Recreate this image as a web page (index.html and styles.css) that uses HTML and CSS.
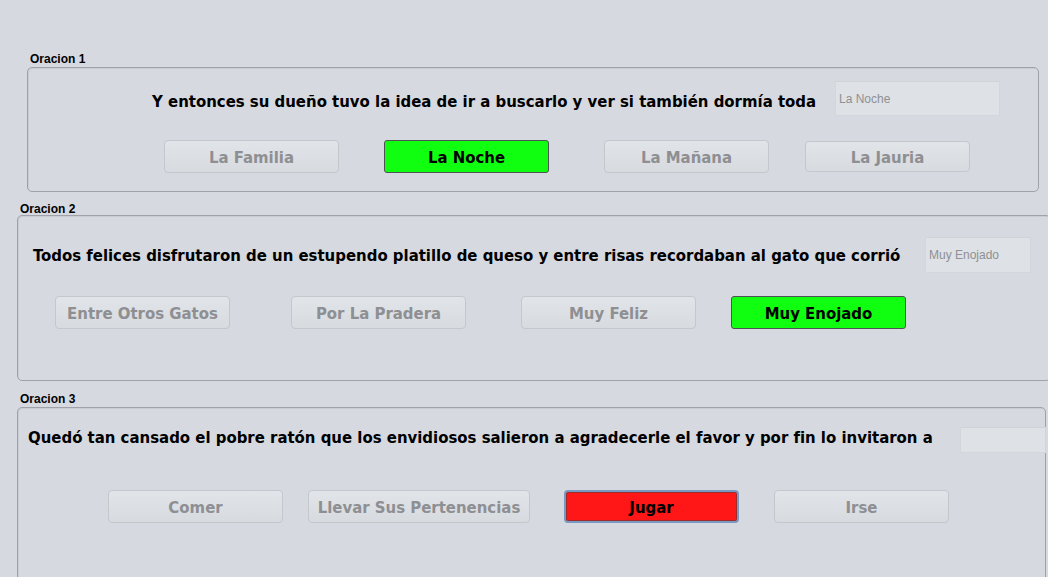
FILE: index.html
```html
<!DOCTYPE html>
<html lang="es">
<head>
<meta charset="utf-8">
<title>Oraciones</title>
<link rel="stylesheet" href="styles.css">
</head>
<body>
<div class="screen">
  <div class="group-title t1">Oracion 1</div>
  <section class="panel p1">
    <div class="sentence-row">
      <span class="sentence">Y entonces su dueño tuvo la idea de ir a buscarlo y ver si también dormía toda</span>
      <div class="field">La Noche</div>
    </div>
    <div class="options">
      <button class="opt" disabled>La Familia</button>
      <button class="opt correct">La Noche</button>
      <button class="opt" disabled>La Mañana</button>
      <button class="opt" disabled>La Jauria</button>
    </div>
  </section>

  <div class="group-title t2">Oracion 2</div>
  <section class="panel p2">
    <div class="sentence-row">
      <span class="sentence">Todos felices disfrutaron de un estupendo platillo de queso y entre risas recordaban al gato que corrió</span>
      <div class="field">Muy Enojado</div>
    </div>
    <div class="options">
      <button class="opt" disabled>Entre Otros Gatos</button>
      <button class="opt" disabled>Por La Pradera</button>
      <button class="opt" disabled>Muy Feliz</button>
      <button class="opt correct">Muy Enojado</button>
    </div>
  </section>

  <div class="group-title t3">Oracion 3</div>
  <section class="panel p3">
    <div class="sentence-row">
      <span class="sentence">Quedó tan cansado el pobre ratón que los envidiosos salieron a agradecerle el favor y por fin lo invitaron a</span>
      <div class="field"></div>
    </div>
    <div class="options">
      <button class="opt" disabled>Comer</button>
      <button class="opt" disabled>Llevar Sus Pertenencias</button>
      <button class="opt wrong">Jugar</button>
      <button class="opt" disabled>Irse</button>
    </div>
  </section>
</div>
</body>
</html>
```

FILE: styles.css
```css
html, body {
  margin: 0;
  padding: 0;
  background: #d6d9df;
  overflow: hidden;
}

.screen {
  width: 1048px;
  height: 577px;
  padding-top: 52px;
  box-sizing: border-box;
  overflow: hidden;
  font-family: "DejaVu Sans Condensed", "DejaVu Sans", sans-serif;
  font-stretch: condensed;
}

.group-title {
  font-family: "Liberation Sans", Arial, sans-serif;
  font-weight: bold;
  font-size: 12px;
  line-height: 14px;
  color: #000;
}
.t1 { margin-left: 30px; height: 14px; margin-bottom: 1px; }
.t2 { margin-left: 20px; margin-top: 10px; height: 13px; }
.t3 { margin-left: 20px; margin-top: 11px; height: 15px; }

.panel {
  box-sizing: border-box;
  border: 1px solid #9fa2a8;
  border-radius: 5px;
  box-shadow: inset 1px 1px 0 #c9ccd2;
  display: flex;
  flex-direction: column;
}
.p1 { margin-left: 27px; width: 1012px; height: 125px; }
.p2 { margin-left: 17px; width: 1034px; height: 166px; }
.p3 { margin-left: 17px; width: 1029px; height: 190px; }

.sentence-row {
  display: flex;
  align-items: center;
}
.sentence {
  font-weight: bold;
  font-size: 16.6px;
  color: #000;
  white-space: nowrap;
}
.field {
  box-sizing: border-box;
  margin-left: auto;
  background: #dee1e5;
  border: 1px solid #d3d6db;
  border-top-color: #cfd2d7;
  font-family: "Liberation Sans", Arial, sans-serif;
  font-size: 12px;
  color: #8e9094;
  padding-left: 3px;
  display: flex;
  align-items: center;
}

.p1 .sentence-row { margin-top: 13px; padding-left: 124px; }
.p1 .sentence { padding-top: 5px; }
.p1 .field { width: 165px; height: 35px; margin-right: 38px; }
.p2 .sentence-row { margin-top: 21px; padding-left: 15px; }
.p2 .field { width: 106px; height: 36px; margin-right: 19px; }
.p3 .sentence-row { margin-top: 19px; padding-left: 10px; }
.p3 .field { width: 86px; height: 26px; margin-right: -1px; }
.p3 .sentence {
  display: block;
  line-height: 20px;
  height: 18px;
  overflow: hidden;
  margin-bottom: 6px;
}

.options {
  display: flex;
  align-items: flex-start;
}
.p1 .options { margin-top: 24px; padding-left: 136px; }
.p2 .options { margin-top: 23px; padding-left: 37px; }
.p3 .options { margin-top: 37px; padding-left: 90px; }

.opt {
  box-sizing: border-box;
  width: 175px;
  height: 33px;
  padding: 2px 0 0;
  font-family: inherit;
  font-stretch: condensed;
  font-weight: bold;
  font-size: 16.6px;
  border-radius: 4px;
  border: 1px solid #c4c7cc;
  background: linear-gradient(#e1e4e8, #d7dadf);
  color: #8e8f92;
}
.opt.correct {
  background: #10ff10;
  border: 1px solid #4f5154;
  border-radius: 3px;
  color: #000;
}
.opt.wrong {
  background: #ff1616;
  border: 2px solid #7799c2;
  box-shadow: inset 0 0 0 1px #9e2a2a;
  color: #000;
}

/* Panel 1 button positions */
.p1 .opt:nth-child(2) { margin-left: 45px; width: 165px; }
.p1 .opt:nth-child(3) { margin-left: 55px; width: 165px; }
.p1 .opt:nth-child(4) { margin-left: 36px; width: 165px; height: 31px; margin-top: 1px; }

/* Panel 2 button positions */
.p2 .opt:nth-child(2) { margin-left: 61px; }
.p2 .opt:nth-child(3) { margin-left: 55px; }
.p2 .opt:nth-child(4) { margin-left: 35px; }

/* Panel 3 button positions */
.p3 .opt:nth-child(2) { margin-left: 25px; width: 222px; }
.p3 .opt:nth-child(3) { margin-left: 34px; }
.p3 .opt:nth-child(4) { margin-left: 35px; }
```
